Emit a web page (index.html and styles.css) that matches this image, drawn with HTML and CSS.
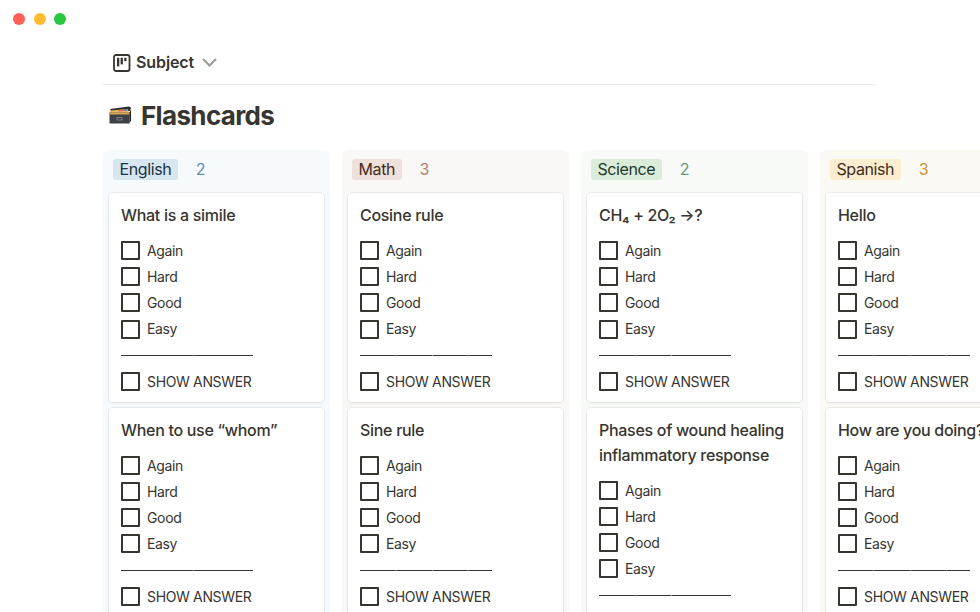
FILE: index.html
```html
<!DOCTYPE html>
<html>
<head>
    <meta charset="UTF-8">
    <title>Flashcards</title>
    <link rel="stylesheet" href="styles.css">
</head>
<body>
    <div class="l-window">
        <div class="lights">
            <span class="light light-red"></span>
            <span class="light light-yellow"></span>
            <span class="light light-green"></span>
        </div>

        <div class="l-page">
            <div class="tabs">
                <svg class="tab-icon" width="18" height="18" viewBox="0 0 18 18">
                    <rect x="1" y="1" width="15.5" height="16" rx="2" fill="none" stroke="#37352f" stroke-width="1.8"/>
                    <rect x="4" y="3.8" width="2.3" height="8.6" fill="#37352f"/>
                    <rect x="7.6" y="3.8" width="2.3" height="6.6" fill="#37352f"/>
                    <rect x="11.2" y="3.8" width="2.3" height="3.4" fill="#37352f"/>
                </svg>
                <span class="tab-name">Subject</span>
                <svg class="tab-arrow" width="15" height="9" viewBox="0 0 15 9">
                    <path d="M1 1l6.5 6.5L14 1" fill="none" stroke="#9b9a97" stroke-width="2"/>
                </svg>
            </div>

            <h1 class="title">
                <svg class="title-icon" width="22" height="18" viewBox="0 0 22 18">
                    <path d="M1 3L20 0.5L22 1.5L21 5H2z" fill="#2a2c30"/>
                    <path d="M1 4.5L19 3.2L20 7.5H1z" fill="#eeb964"/>
                    <path d="M9 3.8L15 3.3L15.5 5L9.5 5.5z" fill="#d9714c"/>
                    <path d="M15 3.4L18 3.2L18.5 4.7L15.5 5z" fill="#4a78c4"/>
                    <path d="M0.5 6.5H20.5V17.5H0.5z" fill="#3d4046"/>
                    <path d="M0.5 6.5H20.5V8.5H0.5z" fill="#d9a653"/>
                    <path d="M20.5 6.5L22 3.5V14.5L20.5 17.5z" fill="#1f2125"/>
                    <rect x="8" y="11.5" width="5" height="2.5" fill="none" stroke="#8b8e93" stroke-width="0.8"/>
                </svg>
                Flashcards
            </h1>
        </div>

        <div class="board">

            <section class="col col-english">
                <header class="col-head">
                    <span class="pill">English</span>
                    <span class="count">2</span>
                </header>
                <article class="card">
                    <h2 class="card-title">What is a simile</h2>
                    <div class="row"><span class="box"></span>Again</div>
                    <div class="row"><span class="box"></span>Hard</div>
                    <div class="row"><span class="box"></span>Good</div>
                    <div class="row"><span class="box"></span>Easy</div>
                    <div class="row"><span class="rule"></span></div>
                    <div class="row"><span class="box"></span>SHOW ANSWER</div>
                </article>
                <article class="card">
                    <h2 class="card-title">When to use “whom”</h2>
                    <div class="row"><span class="box"></span>Again</div>
                    <div class="row"><span class="box"></span>Hard</div>
                    <div class="row"><span class="box"></span>Good</div>
                    <div class="row"><span class="box"></span>Easy</div>
                    <div class="row"><span class="rule"></span></div>
                    <div class="row"><span class="box"></span>SHOW ANSWER</div>
                </article>
            </section>

            <section class="col col-math">
                <header class="col-head">
                    <span class="pill">Math</span>
                    <span class="count">3</span>
                </header>
                <article class="card">
                    <h2 class="card-title">Cosine rule</h2>
                    <div class="row"><span class="box"></span>Again</div>
                    <div class="row"><span class="box"></span>Hard</div>
                    <div class="row"><span class="box"></span>Good</div>
                    <div class="row"><span class="box"></span>Easy</div>
                    <div class="row"><span class="rule"></span></div>
                    <div class="row"><span class="box"></span>SHOW ANSWER</div>
                </article>
                <article class="card">
                    <h2 class="card-title">Sine rule</h2>
                    <div class="row"><span class="box"></span>Again</div>
                    <div class="row"><span class="box"></span>Hard</div>
                    <div class="row"><span class="box"></span>Good</div>
                    <div class="row"><span class="box"></span>Easy</div>
                    <div class="row"><span class="rule"></span></div>
                    <div class="row"><span class="box"></span>SHOW ANSWER</div>
                </article>
            </section>

            <section class="col col-science">
                <header class="col-head">
                    <span class="pill">Science</span>
                    <span class="count">2</span>
                </header>
                <article class="card">
                    <h2 class="card-title">CH₄ + 2O₂ →?</h2>
                    <div class="row"><span class="box"></span>Again</div>
                    <div class="row"><span class="box"></span>Hard</div>
                    <div class="row"><span class="box"></span>Good</div>
                    <div class="row"><span class="box"></span>Easy</div>
                    <div class="row"><span class="rule"></span></div>
                    <div class="row"><span class="box"></span>SHOW ANSWER</div>
                </article>
                <article class="card">
                    <h2 class="card-title">Phases of wound healing inflammatory response</h2>
                    <div class="row"><span class="box"></span>Again</div>
                    <div class="row"><span class="box"></span>Hard</div>
                    <div class="row"><span class="box"></span>Good</div>
                    <div class="row"><span class="box"></span>Easy</div>
                    <div class="row"><span class="rule"></span></div>
                    <div class="row"><span class="box"></span>SHOW ANSWER</div>
                </article>
            </section>

            <section class="col col-spanish">
                <header class="col-head">
                    <span class="pill">Spanish</span>
                    <span class="count">3</span>
                </header>
                <article class="card">
                    <h2 class="card-title">Hello</h2>
                    <div class="row"><span class="box"></span>Again</div>
                    <div class="row"><span class="box"></span>Hard</div>
                    <div class="row"><span class="box"></span>Good</div>
                    <div class="row"><span class="box"></span>Easy</div>
                    <div class="row"><span class="rule"></span></div>
                    <div class="row"><span class="box"></span>SHOW ANSWER</div>
                </article>
                <article class="card">
                    <h2 class="card-title">How are you doing?</h2>
                    <div class="row"><span class="box"></span>Again</div>
                    <div class="row"><span class="box"></span>Hard</div>
                    <div class="row"><span class="box"></span>Good</div>
                    <div class="row"><span class="box"></span>Easy</div>
                    <div class="row"><span class="rule"></span></div>
                    <div class="row"><span class="box"></span>SHOW ANSWER</div>
                </article>
            </section>

        </div>
    </div>
</body>
</html>
```

FILE: styles.css
```css
HTML, BODY {
    height: 100%;
    margin: 0;
    }
BODY {
    overflow: hidden;
    background: #FFF;
    font: 14px/1.4 Inter, "Liberation Sans", sans-serif;
    color: #37352F;
    }
.l-window {
    width: 980px;
    height: 612px;
    overflow: hidden;
    }
.l-page {
    width: 773px;
    margin-left: 103px;
    }

/* Window buttons */
.lights {
    display: flex;
    gap: 8.4px;
    height: 40px;
    padding: 13px 0 0 13.3px;
    box-sizing: border-box;
    }
.light {
    width: 12px;
    height: 12px;
    border-radius: 50%;
    }
.light-red {
    background: #FF5F57;
    }
.light-yellow {
    background: #FEBC2E;
    }
.light-green {
    background: #28C840;
    }

/* View tabs */
.tabs {
    display: flex;
    align-items: center;
    height: 45px;
    margin-bottom: 10px;
    padding-left: 10px;
    padding-top: 1px;
    box-sizing: border-box;
    border-bottom: 1px solid #E9E9E7;
    }
.tab-icon {
    margin-right: 5px;
    }
.tab-name {
    font-size: 16px;
    font-weight: 600;
    letter-spacing: -.1px;
    }
.tab-arrow {
    margin-left: 8px;
    }

/* Heading */
.title {
    display: flex;
    align-items: center;
    height: 42px;
    margin: 0;
    font-size: 26px;
    font-weight: 700;
    line-height: 42px;
    letter-spacing: -.65px;
    }
.title-icon {
    margin: 0 10px 3px 6px;
    }

/* Board */
.board {
    display: flex;
    gap: 12px;
    margin: 13px 0 0 103px;
    }
.col {
    flex: none;
    width: 227px;
    padding: 0 6px;
    box-sizing: border-box;
    border-radius: 6px 6px 0 0;
    }
.col-head {
    display: flex;
    align-items: center;
    height: 38px;
    margin-bottom: 5px;
    padding: 0 4px;
    }
.pill {
    padding: 0 7px 0 6.5px;
    border-radius: 3px;
    font-size: 16px;
    line-height: 21px;
    letter-spacing: -.4px;
    }
.count {
    margin-left: 17.5px;
    font-size: 16px;
    }
.col-english {
    background: #F6FAFD;
    }
.col-english .pill {
    background: #D8E6F0;
    color: #183347;
    }
.col-english .count {
    color: #5B8DB8;
    }
.col-math {
    background: #FAF8F6;
    }
.col-math .pill {
    background: #EEE0DA;
    color: #442A1E;
    }
.col-math .count {
    color: #B07F6A;
    }
.col-science {
    background: #F7FAF7;
    }
.col-science .pill {
    background: #DBECDA;
    color: #1C3829;
    }
.col-science .count {
    color: #6B9A7C;
    }
.col-spanish {
    background: #FBF9F4;
    }
.col-spanish .pill {
    background: #FBEDD0;
    color: #402C1B;
    }
.col-spanish .count {
    color: #C98F3E;
    }

/* Cards */
.card {
    margin-bottom: 6px;
    padding: 10px 12px 7.4px;
    background: #FFF;
    border-radius: 4px;
    box-shadow: 0 0 0 1px rgba(15, 15, 15, .05), 0 1px 3px rgba(15, 15, 15, .06);
    }
.card-title {
    margin: 0 0 9.4px;
    font-size: 16px;
    font-weight: 500;
    line-height: 25px;
    letter-spacing: -.3px;
    }
.row {
    display: flex;
    align-items: center;
    height: 26.2px;
    font-size: 14px;
    letter-spacing: -.35px;
    }
.box {
    flex: none;
    width: 19px;
    height: 19px;
    margin-right: 7px;
    box-sizing: border-box;
    border: 2px solid #37352F;
    border-radius: 1px;
    }
.rule {
    width: 132px;
    height: 1px;
    background: repeating-linear-gradient(90deg, #37352F 0 35.5px, #8E8D89 35.5px 36.5px);
    }
```
